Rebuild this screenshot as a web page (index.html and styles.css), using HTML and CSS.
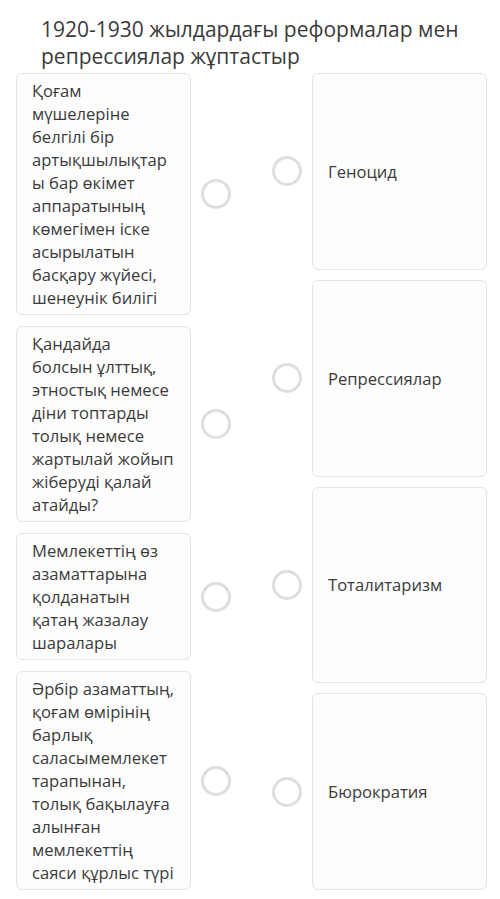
FILE: index.html
```html
<!DOCTYPE html>
<html lang="kk">
<head>
    <meta charset="UTF-8">
    <meta name="viewport" content="width=device-width, initial-scale=1.0">
    <title>Сәйкестендіру</title>
    <link rel="stylesheet" href="styles.css">
</head>
<body>
    <div class="quiz">
        <h1 class="title">1920-1930 жылдардағы реформалар мен репрессиялар жұптастыр</h1>

        <div class="match">
            <!-- left column: definitions -->
            <div class="col">
                <div class="pair">
                    <div class="card">Қоғам мүшелеріне белгілі бір артықшылықтар ы бар өкімет аппаратының көмегімен іске асырылатын басқару жүйесі, шенеунік билігі</div>
                    <span class="dot"></span>
                </div>
                <div class="pair">
                    <div class="card">Қандайда<br>болсын ұлттық, этностық немесе діни топтарды толық немесе жартылай жойып жіберуді қалай атайды?</div>
                    <span class="dot"></span>
                </div>
                <div class="pair">
                    <div class="card">Мемлекеттің өз азаматтарына қолданатын қатаң жазалау шаралары</div>
                    <span class="dot"></span>
                </div>
                <div class="pair">
                    <div class="card">Әрбір азаматтың, қоғам өмірінің барлық саласымемлекет тарапынан, толық бақылауға алынған мемлекеттің саяси құрлыс түрі</div>
                    <span class="dot"></span>
                </div>
            </div>

            <!-- right column: terms -->
            <div class="col col-right">
                <div class="pair">
                    <span class="dot"></span>
                    <div class="card">Геноцид</div>
                </div>
                <div class="pair">
                    <span class="dot"></span>
                    <div class="card">Репрессиялар</div>
                </div>
                <div class="pair">
                    <span class="dot"></span>
                    <div class="card">Тоталитаризм</div>
                </div>
                <div class="pair">
                    <span class="dot"></span>
                    <div class="card">Бюрократия</div>
                </div>
            </div>
        </div>
    </div>
</body>
</html>
```

FILE: styles.css
```css
body {
    margin: 0;
    background-color: #fff;
    font-family: "Open Sans", "Noto Sans", sans-serif;
    color: #3b3b3b;
}
.quiz {
    width: 500px;
}
.title {
    margin: 16px 0 3px;
    padding: 0 20px 0 41px;
    font-size: 21px;
    line-height: 27px;
    font-weight: 400;
    color: #3a3a3a;
}
.match {
    display: grid;
    grid-template-columns: 215px 215px;
    column-gap: 41px;
    padding-left: 16px;
}
.col {
    display: flex;
    flex-direction: column;
    gap: 11px;
}
.col-right {
    gap: 10px;
}
.pair {
    display: flex;
    align-items: center;
    gap: 10px;
}
.col-right .pair {
    flex: 1;
    align-items: stretch;
}
.col-right .dot {
    align-self: center;
}
.card {
    flex: 0 0 175px;
    box-sizing: border-box;
    padding: 5px 12px 5px 15px;
    border: 1px solid #e4e4e4;
    border-radius: 6px;
    background-color: #fdfdfd;
    font-size: 16.6px;
    line-height: 23px;
}
.col-right .card {
    display: flex;
    align-items: center;
}
.dot {
    flex: 0 0 30px;
    width: 30px;
    height: 30px;
    box-sizing: border-box;
    border: 3px solid #dedede;
    border-radius: 50%;
    background-color: #fff;
}
```
